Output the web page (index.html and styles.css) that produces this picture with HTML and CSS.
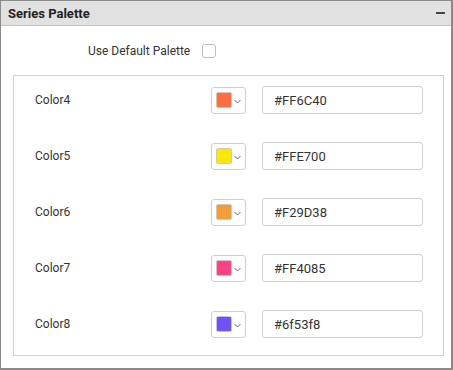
FILE: index.html
```html
<!DOCTYPE html>
<html>
<head>
<meta charset="utf-8">
<link rel="stylesheet" href="styles.css">
</head>
<body>
<div class="panel">
  <div class="header">
    <span class="title">Series Palette</span>
    <span class="minus"></span>
  </div>
  <div class="body">
    <div class="default-row">
      <span class="default-label">Use Default Palette</span>
      <span class="checkbox"></span>
    </div>
    <div class="box">
      <div class="row">
        <span class="label">Color4</span>
        <span class="swatch-btn"><span class="swatch" style="background:#FF6C40"></span><svg class="chev" width="7" height="5" viewBox="0 0 7 5"><path d="M0.5 1 L3.5 4 L6.5 1" fill="none" stroke="#666" stroke-width="1"/></svg></span>
        <span class="hex">#FF6C40</span>
      </div>
      <div class="row">
        <span class="label">Color5</span>
        <span class="swatch-btn"><span class="swatch" style="background:#FFE700"></span><svg class="chev" width="7" height="5" viewBox="0 0 7 5"><path d="M0.5 1 L3.5 4 L6.5 1" fill="none" stroke="#666" stroke-width="1"/></svg></span>
        <span class="hex">#FFE700</span>
      </div>
      <div class="row">
        <span class="label">Color6</span>
        <span class="swatch-btn"><span class="swatch" style="background:#F29D38"></span><svg class="chev" width="7" height="5" viewBox="0 0 7 5"><path d="M0.5 1 L3.5 4 L6.5 1" fill="none" stroke="#666" stroke-width="1"/></svg></span>
        <span class="hex">#F29D38</span>
      </div>
      <div class="row">
        <span class="label">Color7</span>
        <span class="swatch-btn"><span class="swatch" style="background:#FF4085"></span><svg class="chev" width="7" height="5" viewBox="0 0 7 5"><path d="M0.5 1 L3.5 4 L6.5 1" fill="none" stroke="#666" stroke-width="1"/></svg></span>
        <span class="hex">#FF4085</span>
      </div>
      <div class="row">
        <span class="label">Color8</span>
        <span class="swatch-btn"><span class="swatch" style="background:#6f53f8"></span><svg class="chev" width="7" height="5" viewBox="0 0 7 5"><path d="M0.5 1 L3.5 4 L6.5 1" fill="none" stroke="#666" stroke-width="1"/></svg></span>
        <span class="hex">#6f53f8</span>
      </div>
    </div>
  </div>
</div>
</body>
</html>
```
FILE: styles.css
```css
html, body {
  margin: 0;
  padding: 0;
  background: #fff;
}
body {
  font-family: Roboto, "Liberation Sans", sans-serif;
  color: #333;
}
.panel {
  width: 453px;
  height: 370px;
  box-sizing: border-box;
  border: 1px solid #8a8a8a;
  border-right-width: 2px;
  border-bottom-width: 2px;
  display: flex;
  flex-direction: column;
}
.header {
  height: 24px;
  background: #e1e1e1;
  border-bottom: 1px solid #c4c4c4;
  display: flex;
  align-items: center;
  justify-content: space-between;
  padding: 0 6px 0 7px;
}
.title {
  font-size: 13px;
  font-weight: bold;
  color: #222;
}
.minus {
  width: 9px;
  height: 2px;
  background: #444;
}
.body {
  padding: 0 7px 0 12px;
}
.default-row {
  height: 49px;
  display: flex;
  align-items: center;
  padding-left: 75px;
  padding-top: 0;
}
.default-label {
  font-size: 12px;
  color: #333;
  width: 114px;
}
.checkbox {
  width: 12px;
  height: 12px;
  border: 1px solid #bdbdbd;
  border-radius: 3px;
}
.box {
  border: 1px solid #d0d0d0;
  height: 281px;
  box-sizing: border-box;
  padding: 10px 0 0 21px;
  display: flex;
  flex-direction: column;
  gap: 28px;
}
.row {
  height: 28px;
  display: flex;
  align-items: center;
}
.label {
  font-size: 12px;
  width: 176px;
  color: #333;
}
.swatch-btn {
  width: 32px;
  height: 25px;
  border: 1px solid #cfcfcf;
  border-radius: 3px;
  display: flex;
  align-items: center;
  padding-left: 4px;
  box-sizing: content-box;
  width: 29px;
  margin-right: 16px;
}
.swatch {
  width: 16px;
  height: 16px;
  border-radius: 2px;
  border: 1px solid #c8c8c8;
  box-sizing: border-box;
}
.chev {
  margin-left: 2px;
  margin-top: 2px;
}
.hex {
  width: 148px;
  height: 26px;
  border: 1px solid #cfcfcf;
  border-radius: 3px;
  padding-left: 11px;
  font-size: 13px;
  color: #333;
  display: flex;
  align-items: center;
}
```
